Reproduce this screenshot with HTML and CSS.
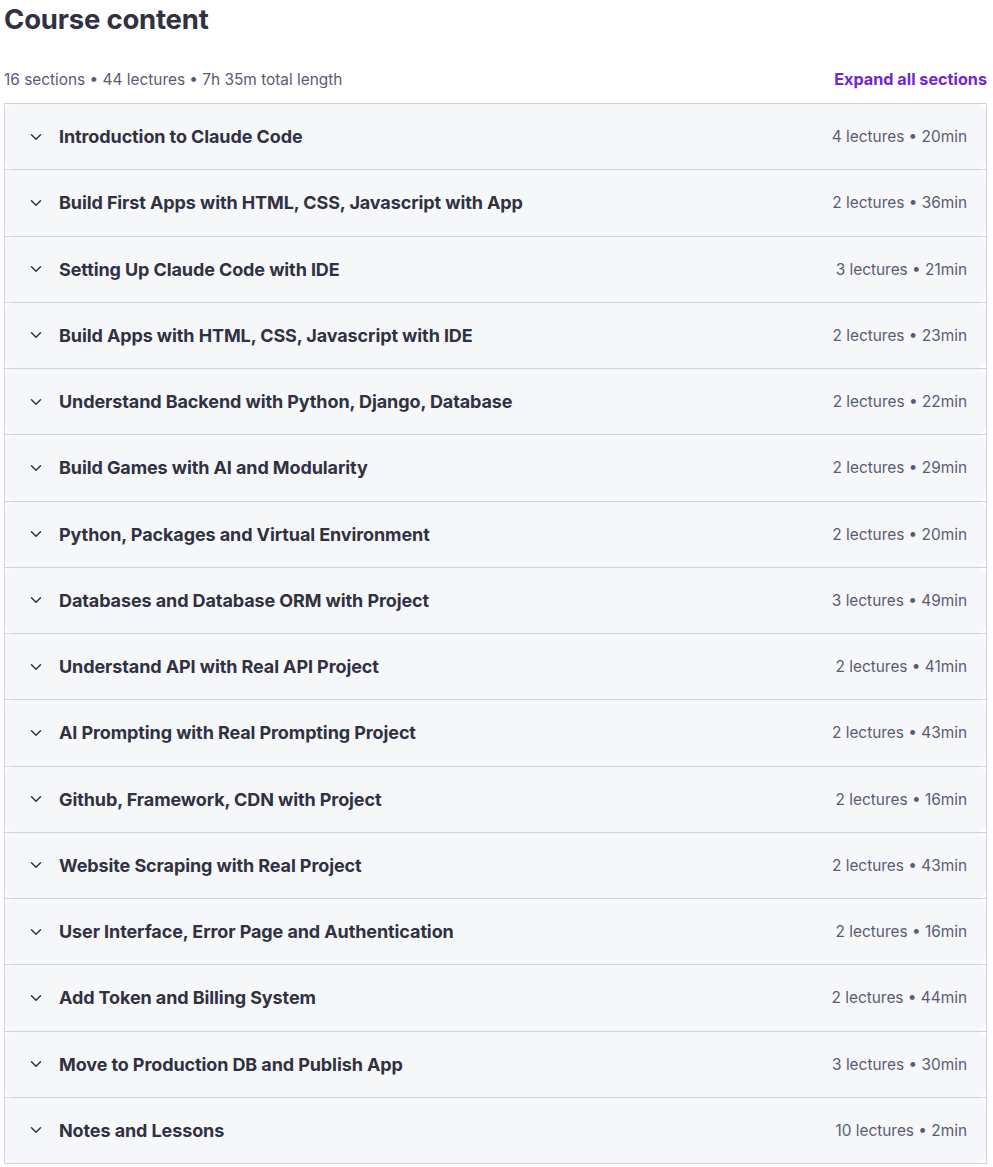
FILE: index.html
```html
<!DOCTYPE html>
<html lang="en">
<head>
<meta charset="utf-8">
<title>Course content</title>
<link rel="stylesheet" href="styles.css">
</head>
<body>
<div class="page">
  <h2 class="title">Course content</h2>
  <div class="summary">
    <span class="summary-text">16 sections • 44 lectures • 7h 35m total length</span>
    <button class="expand">Expand all sections</button>
  </div>
  <div class="sections">
    <div class="section"><div class="head"><svg class="chev" viewBox="0 0 12 8"><path d="M1.5 1.8 6 6.2 10.5 1.8"/></svg><span class="name">Introduction to Claude Code</span><span class="meta">4 lectures • 20min</span></div></div>
    <div class="section"><div class="head"><svg class="chev" viewBox="0 0 12 8"><path d="M1.5 1.8 6 6.2 10.5 1.8"/></svg><span class="name">Build First Apps with HTML, CSS, Javascript with App</span><span class="meta">2 lectures • 36min</span></div></div>
    <div class="section"><div class="head"><svg class="chev" viewBox="0 0 12 8"><path d="M1.5 1.8 6 6.2 10.5 1.8"/></svg><span class="name">Setting Up Claude Code with IDE</span><span class="meta">3 lectures • 21min</span></div></div>
    <div class="section"><div class="head"><svg class="chev" viewBox="0 0 12 8"><path d="M1.5 1.8 6 6.2 10.5 1.8"/></svg><span class="name">Build Apps with HTML, CSS, Javascript with IDE</span><span class="meta">2 lectures • 23min</span></div></div>
    <div class="section"><div class="head"><svg class="chev" viewBox="0 0 12 8"><path d="M1.5 1.8 6 6.2 10.5 1.8"/></svg><span class="name">Understand Backend with Python, Django, Database</span><span class="meta">2 lectures • 22min</span></div></div>
    <div class="section"><div class="head"><svg class="chev" viewBox="0 0 12 8"><path d="M1.5 1.8 6 6.2 10.5 1.8"/></svg><span class="name">Build Games with AI and Modularity</span><span class="meta">2 lectures • 29min</span></div></div>
    <div class="section"><div class="head"><svg class="chev" viewBox="0 0 12 8"><path d="M1.5 1.8 6 6.2 10.5 1.8"/></svg><span class="name">Python, Packages and Virtual Environment</span><span class="meta">2 lectures • 20min</span></div></div>
    <div class="section"><div class="head"><svg class="chev" viewBox="0 0 12 8"><path d="M1.5 1.8 6 6.2 10.5 1.8"/></svg><span class="name">Databases and Database ORM with Project</span><span class="meta">3 lectures • 49min</span></div></div>
    <div class="section"><div class="head"><svg class="chev" viewBox="0 0 12 8"><path d="M1.5 1.8 6 6.2 10.5 1.8"/></svg><span class="name">Understand API with Real API Project</span><span class="meta">2 lectures • 41min</span></div></div>
    <div class="section"><div class="head"><svg class="chev" viewBox="0 0 12 8"><path d="M1.5 1.8 6 6.2 10.5 1.8"/></svg><span class="name">AI Prompting with Real Prompting Project</span><span class="meta">2 lectures • 43min</span></div></div>
    <div class="section"><div class="head"><svg class="chev" viewBox="0 0 12 8"><path d="M1.5 1.8 6 6.2 10.5 1.8"/></svg><span class="name">Github, Framework, CDN with Project</span><span class="meta">2 lectures • 16min</span></div></div>
    <div class="section"><div class="head"><svg class="chev" viewBox="0 0 12 8"><path d="M1.5 1.8 6 6.2 10.5 1.8"/></svg><span class="name">Website Scraping with Real Project</span><span class="meta">2 lectures • 43min</span></div></div>
    <div class="section"><div class="head"><svg class="chev" viewBox="0 0 12 8"><path d="M1.5 1.8 6 6.2 10.5 1.8"/></svg><span class="name">User Interface, Error Page and Authentication</span><span class="meta">2 lectures • 16min</span></div></div>
    <div class="section"><div class="head"><svg class="chev" viewBox="0 0 12 8"><path d="M1.5 1.8 6 6.2 10.5 1.8"/></svg><span class="name">Add Token and Billing System</span><span class="meta">2 lectures • 44min</span></div></div>
    <div class="section"><div class="head"><svg class="chev" viewBox="0 0 12 8"><path d="M1.5 1.8 6 6.2 10.5 1.8"/></svg><span class="name">Move to Production DB and Publish App</span><span class="meta">3 lectures • 30min</span></div></div>
    <div class="section"><div class="head"><svg class="chev" viewBox="0 0 12 8"><path d="M1.5 1.8 6 6.2 10.5 1.8"/></svg><span class="name">Notes and Lessons</span><span class="meta">10 lectures • 2min</span></div></div>
  </div>
</div>
</body>
</html>
```

FILE: styles.css
```css
html, body {
  margin: 0;
  padding: 0;
  background: #ffffff;
}
body {
  font-family: Inter, "Noto Sans", sans-serif;
  color: #303141;
}
.page {
  padding: 0 6px 0 4px;
}
.title {
  margin: 0;
  font-size: 27.5px;
  line-height: 38px;
  font-weight: 700;
  letter-spacing: -0.2px;
  color: #303141;
}
.summary {
  display: flex;
  justify-content: space-between;
  align-items: center;
  height: 32px;
  margin-top: 25px;
  margin-bottom: 8px;
}
.summary-text {
  font-size: 15.4px;
  color: #595c73;
}
.expand {
  border: 0;
  background: none;
  padding: 0;
  font-family: inherit;
  font-size: 16.2px;
  font-weight: 700;
  color: #6d28d2;
  cursor: pointer;
}
.sections {
  border: 1px solid #d1d2e0;
  border-bottom: 0;
}
.section {
  border-bottom: 1px solid #d1d2e0;
}
.head {
  display: flex;
  align-items: center;
  height: 65.25px;
  padding: 0 19px 0 25px;
  background: #f6f7f9;
  border-radius: 8px;
}
.chev {
  width: 12px;
  height: 8px;
  flex: none;
  margin-right: 17px;
  fill: none;
  stroke: #303141;
  stroke-width: 1.5;
  stroke-linecap: round;
  stroke-linejoin: round;
}
.name {
  flex: 1;
  font-size: 18px;
  font-weight: 700;
  letter-spacing: -0.1px;
  color: #303141;
}
.meta {
  font-size: 15.4px;
  color: #595c73;
}
```
